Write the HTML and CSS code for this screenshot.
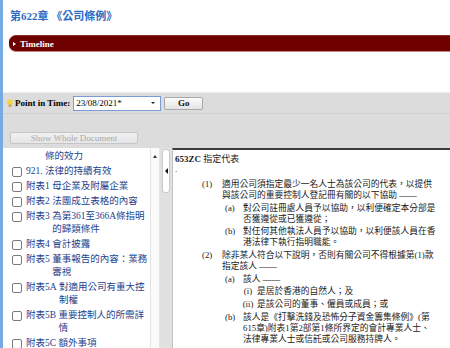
FILE: index.html
```html
<!DOCTYPE html>
<html lang="zh-Hant">
<head>
    <meta charset="UTF-8">
    <meta name="viewport" content="width=device-width, initial-scale=1.0">
    <title>第622章 《公司條例》</title>
    <link rel="stylesheet" href="styles.css">
</head>
<body>
    <h1 class="cap-title">第622章 《公司條例》</h1>

    <div class="timeline">
        <span class="timeline-arrow"></span>Timeline
    </div>

    <div class="pit-panel">
        <div class="pit-row">
            <svg class="bulb" width="6" height="9" viewBox="0 0 6 9">
                <circle cx="3" cy="3" r="2.8" fill="#f2d44a"/>
                <rect x="1.6" y="5.4" width="2.8" height="2.4" fill="#c9a93a"/>
            </svg>
            <span class="pit-label">Point in Time:</span>
            <div class="combo">
                <span>23/08/2021*</span>
                <span class="combo-arrow"></span>
            </div>
            <button class="go-btn">Go</button>
        </div>
        <div class="whole-row">
            <button class="whole-btn" disabled>Show Whole Document</button>
        </div>
    </div>

    <div class="viewer">
        <div class="toc">
            <ul class="toc-list">
                <li class="toc-tail">條的效力</li>
                <li class="toc-item"><span class="toc-box"></span><span class="toc-num">921.</span><span class="toc-ttl">法律的持續有效</span></li>
                <li class="toc-item"><span class="toc-box"></span><span class="toc-num">附表1</span><span class="toc-ttl">母企業及附屬企業</span></li>
                <li class="toc-item"><span class="toc-box"></span><span class="toc-num">附表2</span><span class="toc-ttl">法團成立表格的內容</span></li>
                <li class="toc-item"><span class="toc-box"></span><span class="toc-num">附表3</span><span class="toc-ttl">為第361至366A條指明的歸類條件</span></li>
                <li class="toc-item"><span class="toc-box"></span><span class="toc-num">附表4</span><span class="toc-ttl">會計披露</span></li>
                <li class="toc-item"><span class="toc-box"></span><span class="toc-num">附表5</span><span class="toc-ttl">董事報告的內容：業務審視</span></li>
                <li class="toc-item"><span class="toc-box"></span><span class="toc-num">附表5A</span><span class="toc-ttl">對適用公司有重大控制權</span></li>
                <li class="toc-item"><span class="toc-box"></span><span class="toc-num">附表5B</span><span class="toc-ttl">重要控制人的所需詳情</span></li>
                <li class="toc-item"><span class="toc-box"></span><span class="toc-num">附表5C</span><span class="toc-ttl">額外事項</span></li>
            </ul>
        </div>
        <div class="toc-scroll"><span class="up-arrow"></span></div>
        <div class="splitter">
            <div class="collapse-tab"><span class="left-arrow"></span></div>
        </div>

        <div class="content">
            <div class="sec-head"><b>653ZC</b> 指定代表</div>
            <div class="sec-mark">.</div>

            <div class="para l1">
                <span class="lbl">(1)</span>
                <div class="ptext">適用公司須指定最少一名人士為該公司的代表，以提供與該公司的重要控制人登記冊有關的以下協助 ——</div>
            </div>
            <div class="para l2">
                <span class="lbl">(a)</span>
                <div class="ptext">對公司註冊處人員予以協助，以利便確定本分部是否獲遵從或已獲遵從；</div>
            </div>
            <div class="para l2">
                <span class="lbl">(b)</span>
                <div class="ptext">對任何其他執法人員予以協助，以利便該人員在香港法律下執行指明職能。</div>
            </div>
            <div class="para l1">
                <span class="lbl">(2)</span>
                <div class="ptext">除非某人符合以下說明，否則有關公司不得根據第(1)款指定該人 ——</div>
            </div>
            <div class="para l2">
                <span class="lbl">(a)</span>
                <div class="ptext">該人 ——</div>
            </div>
            <div class="para l3">
                <span class="lbl">(i)</span>
                <div class="ptext">是居於香港的自然人；及</div>
            </div>
            <div class="para l3">
                <span class="lbl">(ii)</span>
                <div class="ptext">是該公司的董事、僱員或成員；或</div>
            </div>
            <div class="para l2">
                <span class="lbl">(b)</span>
                <div class="ptext">該人是《打擊洗錢及恐怖分子資金籌集條例》(第615章)附表1第2部第1條所界定的會計專業人士、法律專業人士或信託或公司服務持牌人。</div>
            </div>
        </div>
    </div>
</body>
</html>
```

FILE: styles.css
```css
*{
    box-sizing: border-box;
}
html, body{
    height: 100%;
}
body{
    margin: 0;
    border-left: 3px solid #74abe2;
    background: #fff;
    font-family: "Liberation Serif", "Noto Sans CJK TC", serif;
    display: flex;
    flex-direction: column;
    overflow: hidden;
}

.cap-title{
    margin: 0;
    padding: 10px 0 0 7px;
    font-size: 11px;
    line-height: 13px;
    color: #2d6bc3;
    font-weight: bold;
}

.timeline{
    margin: 12px 0 0 6px;
    height: 17px;
    padding-left: 4px;
    background: #6e0000;
    border-top: 1px solid #8a2a2a;
    border-bottom: 1px solid #c48a8a;
    border-radius: 7px 0 0 7px;
    color: #fff;
    font-size: 9px;
    font-weight: bold;
    display: flex;
    align-items: center;
}
.timeline-arrow{
    width: 0;
    height: 0;
    border-left: 3px solid #fff;
    border-top: 2.5px solid transparent;
    border-bottom: 2.5px solid transparent;
    margin-right: 4px;
}

/* point in time bar */
.pit-panel{
    margin-top: 40px;
    background: #dcdcdc;
    border-top: 1px solid #efefef;
}
.pit-row{
    height: 21px;
    padding-left: 4px;
    border-bottom: 1px solid #d0d0d0;
    display: flex;
    align-items: center;
}
.bulb{
    margin-right: 2px;
    flex: none;
}
.pit-label{
    font-size: 9px;
    font-weight: bold;
    margin-right: 3px;
}
.combo{
    width: 88px;
    height: 15px;
    padding: 0 5px 0 2px;
    background: #fff;
    border: 1px solid #7a9cd3;
    font-size: 9px;
    display: flex;
    align-items: center;
    justify-content: space-between;
}
.combo-arrow{
    width: 0;
    height: 0;
    border-top: 2.5px solid #222;
    border-left: 2px solid transparent;
    border-right: 2px solid transparent;
}
.go-btn{
    margin-left: 3px;
    width: 39px;
    height: 13px;
    padding: 0;
    font-family: inherit;
    font-size: 9px;
    font-weight: bold;
    line-height: 11px;
    color: #111;
    background: linear-gradient(#fbfbfb, #e4e4e4);
    border: 1px solid #a9a9a9;
    border-radius: 2px;
}
.whole-row{
    height: 34px;
    padding: 13px 0 0 7px;
}
.whole-btn{
    width: 128px;
    height: 12px;
    padding: 0;
    font-family: inherit;
    font-size: 9px;
    line-height: 10px;
    color: #a9a9a9;
    background: linear-gradient(#f0f0f0, #e6e6e6);
    border: 1px solid #c6c6c6;
    border-radius: 2px;
}

/* document viewer */
.viewer{
    flex: 1;
    min-height: 0;
    display: flex;
}
.toc{
    width: 147px;
    flex: none;
    padding: 2px 1px 0 0;
    background: #fff;
    overflow: hidden;
    font-size: 9.5px;
    line-height: 13px;
    color: #233f8c;
}
.toc-list{
    margin: 0;
    padding: 0;
    list-style: none;
    display: flex;
    flex-direction: column;
    gap: 2px;
}
.toc-tail{
    padding-left: 42px;
}
.toc-item{
    padding-left: 9px;
    display: flex;
    align-items: flex-start;
}
.toc-box{
    flex: none;
    width: 10px;
    height: 10px;
    margin: 1.5px 4px 0 0;
    border: 1px solid #7b7b7b;
    border-radius: 2px;
    background: #fff;
}
.toc-num{
    flex: none;
    padding-right: 0.25em;
}
.toc-ttl{
    flex: 1;
    min-width: 0;
}
.toc-scroll{
    width: 10px;
    flex: none;
    background: #fbfbfb;
    border-left: 1px solid #e4e4e4;
    border-right: 1px solid #e4e4e4;
    display: flex;
    justify-content: center;
    padding-top: 7px;
}
.up-arrow{
    width: 0;
    height: 0;
    border-bottom: 3px solid #333;
    border-left: 2px solid transparent;
    border-right: 2px solid transparent;
}
.splitter{
    width: 12px;
    flex: none;
    background: #e1e1e1;
    padding: 1px 0 0 2px;
}
.collapse-tab{
    width: 8px;
    height: 44px;
    background: #fff;
    border: 1px solid #c9c9c9;
    border-radius: 3px;
    display: flex;
    align-items: center;
    justify-content: center;
}
.left-arrow{
    width: 0;
    height: 0;
    border-right: 3px solid #111;
    border-top: 3px solid transparent;
    border-bottom: 3px solid transparent;
}

.content{
    flex: 1;
    min-width: 0;
    padding: 3px 12px 0 2px;
    border-top: 2px solid #3c3c3c;
    border-left: 1px solid #c2c2c2;
    font-size: 8.75px;
    line-height: 11px;
    color: #1a1a1a;
}
.sec-head{
    font-size: 9px;
    line-height: 12px;
}
.sec-mark{
    line-height: 8px;
    margin-bottom: 6px;
}
.para{
    display: flex;
    margin-bottom: 1.7px;
}
.para .lbl{
    flex: none;
}
.para .ptext{
    flex: 1;
    min-width: 0;
}
.l1{
    margin-left: 27px;
}
.l1 .lbl{
    width: 20px;
}
.l2{
    margin-left: 50px;
}
.l2 .lbl{
    width: 18px;
}
.l3{
    margin-left: 64px;
}
.l3 .lbl{
    width: 18px;
    text-align: center;
}
```
